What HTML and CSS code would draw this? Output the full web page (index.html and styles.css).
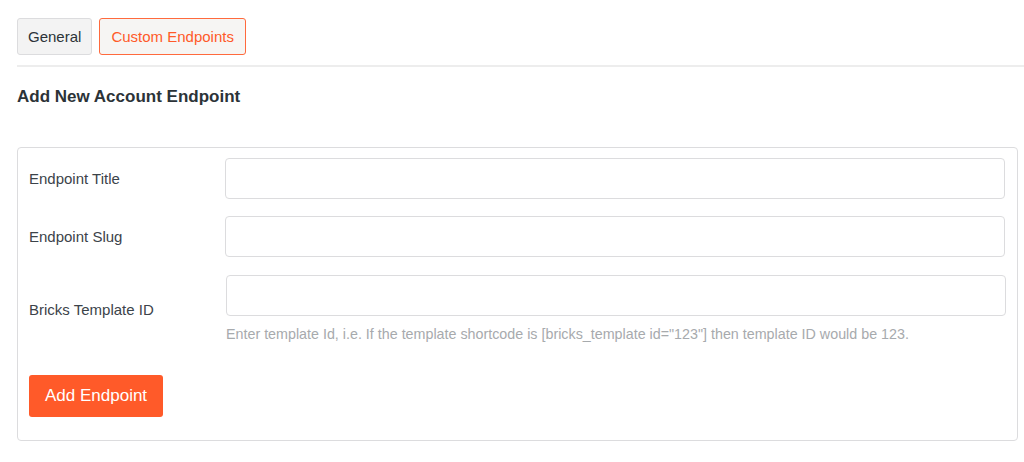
FILE: index.html
```html
<!DOCTYPE html>
<html>
<head>
<meta charset="utf-8">
<link rel="stylesheet" href="styles.css">
</head>
<body>
<div class="page">
  <nav class="tabs">
    <button class="tab">General</button>
    <button class="tab tab-active">Custom Endpoints</button>
  </nav>
  <div class="divider"></div>
  <h2 class="heading">Add New Account Endpoint</h2>
  <form class="card">
    <div class="row">
      <label class="label">Endpoint Title</label>
      <div class="field"><input class="input" type="text"></div>
    </div>
    <div class="row">
      <label class="label">Endpoint Slug</label>
      <div class="field"><input class="input" type="text"></div>
    </div>
    <div class="row row-help">
      <label class="label">Bricks Template ID</label>
      <div class="field field-shift">
        <input class="input" type="text">
        <p class="help">Enter template Id, i.e. If the template shortcode is [bricks_template id="123"] then template ID would be 123.</p>
      </div>
    </div>
    <div class="actions">
      <button type="button" class="btn">Add Endpoint</button>
    </div>
  </form>
</div>
</body>
</html>
```
FILE: styles.css
```css
* { box-sizing: border-box; }
html, body { margin: 0; padding: 0; background: #fff; }
body {
  font-family: "Liberation Sans", Arial, sans-serif;
  color: #3c434a;
}
.page {
  padding: 18px 0 0 17px;
}
.tabs {
  display: flex;
  gap: 7px;
}
.tab {
  font-family: inherit;
  font-size: 15px;
  height: 37px;
  padding: 0 10px;
  border: 1px solid #dcdcde;
  border-radius: 3px;
  background: #f3f3f3;
  color: #2c3338;
}
.tab-active {
  border-color: #ff6a3d;
  color: #ff5a29;
  background: #f6f5f3;
  padding: 0 11px;
}
.divider {
  height: 2px;
  background: #ededed;
  margin-top: 10px;
}
.heading {
  margin: 19px 0 0;
  font-size: 17px;
  font-weight: bold;
  color: #2c3338;
  line-height: 21px;
}
.card {
  margin: 40px 6px 0 0;
  border: 1px solid #dcdcde;
  border-radius: 4px;
  padding: 10px 12px 23px 11px;
  display: flex;
  flex-direction: column;
}
.row {
  display: grid;
  grid-template-columns: 196px 1fr;
  align-items: center;
  margin-bottom: 17px;
}
.row-help { margin-top: 1px; margin-bottom: 0; }
.label {
  font-size: 15px;
  color: #3c434a;
}
.field-shift { padding-left: 1px; margin-right: -1px; }
.input {
  display: block;
  width: 100%;
  height: 41px;
  border: 1px solid #dcdcde;
  border-radius: 4px;
  background: #fff;
}
.help {
  margin: 10px 0 0;
  font-size: 14.3px;
  line-height: 17px;
  color: #a7aaad;
}
.actions {
  margin-top: 32px;
}
.btn {
  font-family: inherit;
  font-size: 17px;
  height: 42px;
  padding: 0 16px;
  border: none;
  border-radius: 3px;
  background: #ff5a29;
  color: #fff;
}
```
